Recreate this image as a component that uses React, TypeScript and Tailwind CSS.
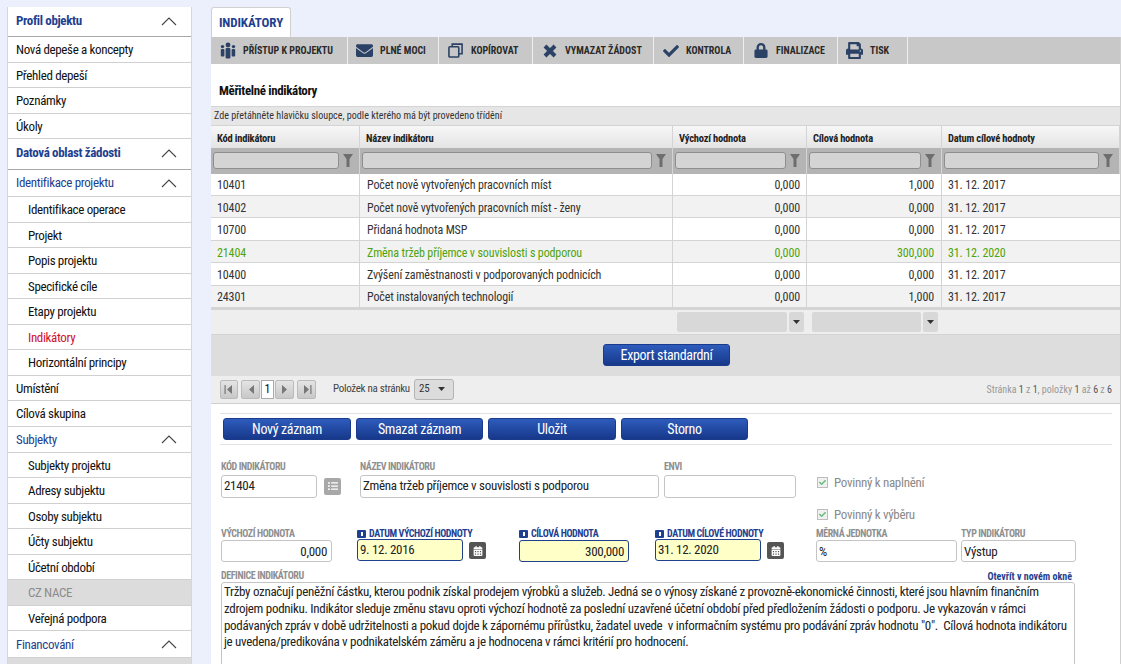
import { FaCalendarAlt, FaCheck, FaEnvelope, FaListUl, FaLock, FaPrint } from "react-icons/fa";

const menu = [
  { label: "Profil objektu", kind: "head", h: "h-[30px] pb-[1px]", chevron: true },
  { label: "Nová depeše a koncepty", kind: "item" },
  { label: "Přehled depeší", kind: "item" },
  { label: "Poznámky", kind: "item" },
  { label: "Úkoly", kind: "item" },
  { label: "Datová oblast žádosti", kind: "head", h: "h-[31px] pb-[2px]", chevron: true },
  { label: "Identifikace projektu", kind: "group", h: "h-[27px]", chevron: true },
  { label: "Identifikace operace", kind: "sub" },
  { label: "Projekt", kind: "sub" },
  { label: "Popis projektu", kind: "sub" },
  { label: "Specifické cíle", kind: "sub" },
  { label: "Etapy projektu", kind: "sub" },
  { label: "Indikátory", kind: "active" },
  { label: "Horizontální principy", kind: "sub" },
  { label: "Umístění", kind: "item" },
  { label: "Cílová skupina", kind: "item" },
  { label: "Subjekty", kind: "group", h: "h-[26px] pt-[1px]", chevron: true },
  { label: "Subjekty projektu", kind: "sub" },
  { label: "Adresy subjektu", kind: "sub" },
  { label: "Osoby subjektu", kind: "sub" },
  { label: "Účty subjektu", kind: "sub" },
  { label: "Účetní období", kind: "sub" },
  { label: "CZ NACE", kind: "disabled" },
  { label: "Veřejná podpora", kind: "sub" },
  { label: "Financování", kind: "group", h: "h-[27px] pt-[1px]", chevron: true },
];

function PeopleIcon() {
  return (
    <svg viewBox="0 0 16 17" className="w-[16px] h-[17px]" fill="currentColor">
      <circle cx="8" cy="3" r="2.4" />
      <rect x="5.6" y="6" width="4.8" height="10.5" rx="1.2" />
      <circle cx="2.5" cy="4.6" r="1.7" />
      <rect x="0.8" y="7" width="3.6" height="7.5" rx="1" />
      <circle cx="13.5" cy="4.6" r="1.7" />
      <rect x="11.6" y="7" width="3.6" height="7.5" rx="1" />
    </svg>
  );
}

function CopyIcon() {
  return (
    <svg viewBox="0 0 16 16" className="w-[15px] h-[15px]" fill="none" stroke="currentColor" strokeWidth="1.7">
      <rect x="1" y="4" width="10.5" height="11" rx="1" />
      <path d="M4.5 4V1.2H15V11.5H11.5" />
    </svg>
  );
}

function CrossIcon() {
  return (
    <svg viewBox="0 0 14 14" className="w-[14px] h-[14px]" fill="none" stroke="currentColor" strokeWidth="4">
      <path d="M2 2L12 12M12 2L2 12" />
    </svg>
  );
}

const toolbar = [
  { label: "PŘÍSTUP K PROJEKTU", icon: <PeopleIcon />, w: "w-[137px]" },
  { label: "PLNÉ MOCI", icon: <FaEnvelope className="w-[17px] h-[17px]" />, w: "w-[91px]" },
  { label: "KOPÍROVAT", icon: <CopyIcon />, w: "w-[94px]" },
  { label: "VYMAZAT ŽÁDOST", icon: <CrossIcon />, w: "w-[121px]" },
  { label: "KONTROLA", icon: <FaCheck className="w-[16px] h-[16px]" />, w: "w-[90px]" },
  { label: "FINALIZACE", icon: <FaLock className="w-[14px] h-[15px]" />, w: "w-[94px]" },
  { label: "TISK", icon: <FaPrint className="w-[17px] h-[17px]" />, w: "w-[70px]" },
];

const rows = [
  ["10401", "Počet nově vytvořených pracovních míst", "0,000", "1,000", "31. 12. 2017"],
  ["10402", "Počet nově vytvořených pracovních míst - ženy", "0,000", "0,000", "31. 12. 2017"],
  ["10700", "Přidaná hodnota MSP", "0,000", "0,000", "31. 12. 2017"],
  ["21404", "Změna tržeb příjemce v souvislosti s podporou", "0,000", "300,000", "31. 12. 2020"],
  ["10400", "Zvýšení zaměstnanosti v podporovaných podnicích", "0,000", "0,000", "31. 12. 2017"],
  ["24301", "Počet instalovaných technologií", "0,000", "1,000", "31. 12. 2017"],
];

const cols = "grid grid-cols-[149px_313px_134px_135px_1fr]";

function Chevron() {
  return (
    <svg viewBox="0 0 16 9" className="w-[16px] h-[9px]" fill="none" stroke="#444" strokeWidth="1.1">
      <path d="M1 8L8 1L15 8" />
    </svg>
  );
}

function MenuRow({ item }: { item: (typeof menu)[number] }) {
  const base = "flex items-center justify-between border-b border-[#d0d0d0] pr-[14px] text-[13px] tracking-[-0.35px]";
  const styles: Record<string, string> = {
    head: "pl-[8px] font-bold text-[#1f3f8f] border-b-[#a8a8a8]",
    item: "pl-[8px] pt-[1px] text-[#111]",
    group: "pl-[8px] text-[#1f3f8f]",
    sub: "pl-[20px] pt-[1px] text-[#111]",
    active: "pl-[20px] pt-[1px] text-[#d0112b]",
    disabled: "pl-[20px] pt-[1px] text-[#8c8c8c] bg-[#dcdcdc]",
  };
  return (
    <div className={`${base} ${styles[item.kind]} ${item.h ?? "h-[25.5px]"}`}>
      <span>{item.label}</span>
      {item.chevron && <Chevron />}
    </div>
  );
}

function Sidebar() {
  return (
    <aside className="w-[185px] shrink-0 bg-white border-x border-[#d3d6de] overflow-hidden">
      {menu.map((item) => (
        <MenuRow key={item.label} item={item} />
      ))}
      <div className="h-[10px] bg-[#dcdcdc]" />
    </aside>
  );
}

function BlueButton({ label, className }: { label: string; className: string }) {
  return (
    <button className={`h-[22px] rounded-[3px] border border-[#1a3a8c] bg-linear-to-b from-[#2e5cbc] to-[#17388a] text-white text-[14px] tracking-[-0.35px] ${className}`}>
      {label}
    </button>
  );
}

function FieldLabel({ text, required }: { text: string; required?: boolean }) {
  return (
    <div className={`h-[13px] flex items-center gap-[3px] text-[10px] leading-[12px] font-bold tracking-[-0.4px] ${required ? "text-[#1f3f8f]" : "text-[#8f8f8f]"}`}>
      {required && (
        <span className="w-[9px] h-[8px] bg-[#1f3f8f] rounded-[1px] flex items-center justify-center">
          <span className="w-[2px] h-[4px] bg-white" />
        </span>
      )}
      {text}
    </div>
  );
}

function Input({ value, className, tone, right }: { value?: string; className: string; tone?: "req"; right?: boolean }) {
  const toneCls = tone === "req" ? "bg-[#ffffc8] border-[#1f3f8f]" : "bg-white border-[#c4c4c4]";
  return (
    <div className={`rounded-[3px] border ${toneCls} flex items-center px-[2px] text-[13px] tracking-[-0.3px] text-[#222] ${right ? "justify-end pr-[4px]" : ""} ${className}`}>
      {value}
    </div>
  );
}

function IconBox({ dark, children }: { dark?: boolean; children: React.ReactNode }) {
  return (
    <div className={`w-[17px] h-[17px] rounded-[2px] flex items-center justify-center text-white ${dark ? "bg-[#555]" : "bg-[#a8a8a8]"}`}>
      {children}
    </div>
  );
}

function Check({ label }: { label: string }) {
  return (
    <div className="flex items-center gap-[6px] text-[13px] leading-[17px] tracking-[-0.3px] text-[#8a8a8a]">
      <span className="w-[11px] h-[11px] border border-[#bdbdbd] bg-[#f0f0f0] flex items-center justify-center">
        <FaCheck className="w-[7px] h-[7px] text-[#66bb77]" />
      </span>
      {label}
    </div>
  );
}

function PagerIcon({ dir, bar }: { dir: "l" | "r"; bar?: boolean }) {
  return (
    <svg viewBox="0 0 10 9" className="w-[10px] h-[9px]" fill="#777">
      {dir === "l" ? <polygon points="8,0 8,9 3,4.5" /> : <polygon points="2,0 2,9 7,4.5" />}
      {bar && (dir === "l" ? <rect x="0.5" y="0" width="1.2" height="9" /> : <rect x="8.3" y="0" width="1.2" height="9" />)}
    </svg>
  );
}

function Caret() {
  return (
    <svg viewBox="0 0 7 4" className="w-[7px] h-[4px]" fill="#333">
      <polygon points="0,0 7,0 3.5,4" />
    </svg>
  );
}

function FunnelIcon() {
  return (
    <svg viewBox="0 0 10 13" className="w-[10px] h-[13px] shrink-0" fill="#6e6e6e">
      <polygon points="0,0 10,0 6.5,5 6.5,13 3.5,13 3.5,5" />
    </svg>
  );
}

function Pager() {
  const btn = "h-[19px] rounded-[2px] border border-[#bbb] bg-linear-to-b from-[#e4e4e4] to-[#c8c8c8] flex items-center justify-center";
  return (
    <div className="h-[28px] bg-[#eeeeee] border-b border-[#cfcfcf] flex items-center pl-[9px] pr-[8px]">
      <div className={`${btn} w-[18px]`}><PagerIcon dir="l" bar /></div>
      <div className={`${btn} w-[19px] ml-[3px]`}><PagerIcon dir="l" /></div>
      <div className="w-[13px] h-[19px] ml-[1px] border border-[#aaa] bg-white flex items-center justify-center text-[12px] text-[#111]">1</div>
      <div className={`${btn} w-[19px] ml-[1px]`}><PagerIcon dir="r" /></div>
      <div className={`${btn} w-[19px] ml-[3px]`}><PagerIcon dir="r" bar /></div>
      <span className="ml-[17px] text-[11px] tracking-[-0.3px] text-[#444]">Položek na stránku</span>
      <div className="ml-[4px] w-[40px] h-[21px] rounded-[3px] border border-[#b4b4b4] bg-[#dcdcdc] flex items-center justify-between pl-[4px] pr-[8px] text-[11px] text-[#333]">
        25 <Caret />
      </div>
      <span className="ml-auto text-[10px] text-[#999]">
        Stránka <span className="text-[#555]">1</span> z <span className="text-[#555]">1</span>, položky <span className="text-[#555]">1</span> až <span className="text-[#555]">6</span> z <span className="text-[#555]">6</span>
      </span>
    </div>
  );
}

function Grid() {
  const heads = ["Kód indikátoru", "Název indikátoru", "Výchozí hodnota", "Cílová hodnota", "Datum cílové hodnoty"];
  return (
    <div>
      <div className="h-[20px] bg-[#e6e6e6] border-y border-[#d4d4d4] flex items-center pl-[3px] text-[10.1px] text-[#333]">
        Zde přetáhněte hlavičku sloupce, podle kterého má být provedeno třídění
      </div>
      <div className={`${cols} h-[22px] bg-linear-to-b from-[#f7f7f7] to-[#e4e4e4]`}>
        {heads.map((h) => (
          <div key={h} className="flex items-center pl-[6px] pt-[3px] border-r border-[#d4d4d4] text-[10.5px] tracking-[-0.2px] font-bold text-[#222]">{h}</div>
        ))}
      </div>
      <div className={`${cols} h-[25.7px] bg-[#b4b4b4]`}>
        {heads.map((h) => (
          <div key={h} className="flex items-center pl-[2px] pr-[6px] gap-[4px] border-r border-[#d4d4d4]">
            <div className="flex-1 h-[17px] rounded-[3px] border border-[#8e8e8e] bg-[#d4d4d4]" />
            <FunnelIcon />
          </div>
        ))}
      </div>
      {rows.map((r, i) => {
        const green = r[0] === "21404";
        return (
          <div key={r[0]} className={`${cols} h-[22.4px] border-b border-[#d4d4d4] text-[12px] tracking-[-0.13px] ${green ? "bg-[#f2f2f2] text-[#4fa30b]" : i % 2 ? "bg-[#f2f2f2] text-[#333]" : "bg-white text-[#333]"}`}>
            <div className="flex items-center pl-[6px] pt-[2px] border-r border-[#d4d4d4]">{r[0]}</div>
            <div className="flex items-center pl-[7px] pt-[2px] border-r border-[#d4d4d4]">{r[1]}</div>
            <div className="flex items-center justify-end pr-[6px] pt-[2px] border-r border-[#d4d4d4]">{r[2]}</div>
            <div className="flex items-center justify-end pr-[7px] pt-[2px] border-r border-[#d4d4d4]">{r[3]}</div>
            <div className="flex items-center pl-[6px] pt-[2px]">{r[4]}</div>
          </div>
        );
      })}
      <div className="h-[26.7px] bg-[#eeeeee] border-t-2 border-[#d4d4d4] border-b flex items-center gap-[8px] pl-[466px]">
        <div className="flex items-center gap-[2px]">
          <div className="w-[110px] h-[20px] rounded-[2px] bg-[#d8d8d8]" />
          <div className="w-[15px] h-[20px] rounded-[2px] bg-[#d8d8d8] flex items-center justify-center"><Caret /></div>
        </div>
        <div className="flex items-center gap-[2px]">
          <div className="w-[109px] h-[20px] rounded-[2px] bg-[#d8d8d8]" />
          <div className="w-[15px] h-[20px] rounded-[2px] bg-[#d8d8d8] flex items-center justify-center"><Caret /></div>
        </div>
      </div>
      <div className="h-[41px] bg-[#dddddd] flex items-center justify-center pl-[2px]">
        <BlueButton label="Export standardní" className="w-[127px]" />
      </div>
      <Pager />
    </div>
  );
}

function Form() {
  return (
    <div className="pl-[10px] pr-[8px]">
      <div className="mt-[9px] border-y border-[#e2e2e2] h-[32px] flex items-center gap-[5px] pl-[3px] -ml-[1px]">
        <BlueButton label="Nový záznam" className="w-[128px]" />
        <BlueButton label="Smazat záznam" className="w-[127px]" />
        <BlueButton label="Uložit" className="w-[128px]" />
        <BlueButton label="Storno" className="w-[127px]" />
      </div>
      <div className="mt-[16px] flex h-[66.5px]">
        <div className="w-[139px]">
          <FieldLabel text="KÓD INDIKÁTORU" />
          <div className="mt-[1px] flex items-center gap-[7px]">
            <Input value="21404" className="w-[96px] h-[23px]" />
            <IconBox><FaListUl className="w-[10px] h-[10px]" /></IconBox>
          </div>
        </div>
        <div className="w-[304px]">
          <FieldLabel text="NÁZEV INDIKÁTORU" />
          <Input value="Změna tržeb příjemce v souvislosti s podporou" className="mt-[1px] w-[299px] h-[23px]" />
        </div>
        <div className="w-[153px]">
          <FieldLabel text="ENVI" />
          <Input className="mt-[1px] w-[132px] h-[23px]" />
        </div>
        <div className="flex flex-col gap-[15px] pt-[13px]">
          <Check label="Povinný k naplnění" />
          <Check label="Povinný k výběru" />
        </div>
      </div>
      <div className="flex h-[43px]">
        <div className="w-[136px]">
          <FieldLabel text="VÝCHOZÍ HODNOTA" />
          <Input value="0,000" right className="w-[111px] h-[22px] pt-[2px]" />
        </div>
        <div className="w-[162px]">
          <FieldLabel text="DATUM VÝCHOZÍ HODNOTY" required />
          <div className="flex items-center gap-[6px]">
            <Input value="9. 12. 2016" tone="req" className="w-[106px] h-[22px] -mt-[1px] pb-[1px]" />
            <IconBox dark><FaCalendarAlt className="w-[10px] h-[10px]" /></IconBox>
          </div>
        </div>
        <div className="w-[136px]">
          <FieldLabel text="CÍLOVÁ HODNOTA" required />
          <Input value="300,000" right tone="req" className="w-[110px] h-[22px] pt-[2px]" />
        </div>
        <div className="w-[161px]">
          <FieldLabel text="DATUM CÍLOVÉ HODNOTY" required />
          <div className="flex items-center gap-[6px]">
            <Input value="31. 12. 2020" tone="req" className="w-[106px] h-[22px] -mt-[1px] pb-[1px]" />
            <IconBox dark><FaCalendarAlt className="w-[10px] h-[10px]" /></IconBox>
          </div>
        </div>
        <div className="w-[145px]">
          <FieldLabel text="MĚRNÁ JEDNOTKA" />
          <Input value="%" className="w-[141px] h-[22px] pt-[2px]" />
        </div>
        <div>
          <FieldLabel text="TYP INDIKÁTORU" />
          <Input value="Výstup" className="w-[115px] h-[22px] pt-[2px]" />
        </div>
      </div>
      <div className="w-[854px]">
        <div className="flex justify-between items-center h-[12px] pr-[3px]">
          <FieldLabel text="DEFINICE INDIKÁTORU" />
          <span className="text-[10px] font-bold text-[#1f3f8f]">Otevřít v novém okně</span>
        </div>
        <div className="h-[90px] rounded-[3px] border border-[#c4c4c4] px-[2px] pt-[1px] text-[13px] leading-[16.7px] tracking-[-0.3px] whitespace-nowrap text-[#222]">
          Tržby označují peněžní částku, kterou podnik získal prodejem výrobků a služeb. Jedná se o výnosy získané z provozně-ekonomické činnosti, které jsou hlavním finančním<br />
          zdrojem podniku. Indikátor sleduje změnu stavu oproti výchozí hodnotě za poslední uzavřené účetní období před předložením žádosti o podporu. Je vykazován v rámci<br />
          podávaných zpráv v době udržitelnosti a pokud dojde k zápornému přírůstku, žadatel uvede&nbsp; v informačním systému pro podávání zpráv hodnotu "0".&nbsp; Cílová hodnota indikátoru<br />
          je uvedena/predikována v podnikatelském záměru a je hodnocena v rámci kritérií pro hodnocení.
        </div>
      </div>
    </div>
  );
}

export default function App() {
  return (
    <div className="font-['Roboto_Condensed',Roboto,sans-serif] h-[664px] overflow-hidden bg-[#ebf0fc] flex pt-[7px] pl-[7px] gap-[19px]">
      <Sidebar />
      <main className="flex-1 min-w-0">
        <div className="w-[80px] h-[30px] rounded-t-[3px] border border-b-0 border-[#d0d0d0] bg-white flex items-center justify-center text-[13px] tracking-[-0.1px] font-bold text-[#1f3f8f]">
          INDIKÁTORY
        </div>
        <div className="bg-white border-r border-[#cfcfcf]">
          <div className="h-[27px] bg-[#c8c8c8] flex">
            {toolbar.map((t) => (
              <div key={t.label} className={`${t.w} flex items-center gap-[7px] pl-[8px] border-r border-[#eee] text-[10px] font-bold text-[#2a2a2a]`}>
                <span className="text-[#2b4266] flex justify-center w-[17px]">{t.icon}</span>
                {t.label}
              </div>
            ))}
          </div>
          <div className="h-[42px] flex items-center pl-[8px] pt-[12px] text-[13px] tracking-[-0.35px] font-bold text-[#111]">Měřitelné indikátory</div>
          <Grid />
          <Form />
        </div>
      </main>
    </div>
  );
}
